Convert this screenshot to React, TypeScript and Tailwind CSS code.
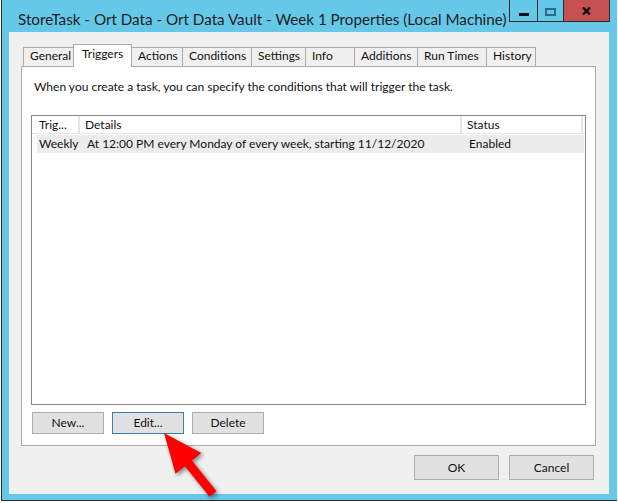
const tabs = [
  { label: "General", w: "w-[51px]" },
  { label: "Triggers", w: "w-[59px]", active: true },
  { label: "Actions", w: "w-[52px]" },
  { label: "Conditions", w: "w-[70px]" },
  { label: "Settings", w: "w-[55px]" },
  { label: "Info", w: "w-[50px]" },
  { label: "Additions", w: "w-[64px]" },
  { label: "Run Times", w: "w-[70px]" },
  { label: "History", w: "w-[50px]" },
]

function TitleButtons() {
  return (
    <div className="-mr-px flex h-[22px] border-x border-b border-[#2a2a2a]">
      <div className="flex w-[28px] items-start justify-center border-r border-[#2a2a2a] pt-[13px]">
        <div className="h-[3px] w-[10px] bg-[#111]" />
      </div>
      <div className="flex w-[26px] items-start justify-center border-r border-[#2a2a2a] pt-[8px]">
        <div className="h-[8px] w-[11px] border-2 border-[#2d6a8a]" />
      </div>
      <div className="flex w-[45px] items-center justify-center bg-[#c75050]">
        <svg width="9" height="8" viewBox="0 0 9 8">
          <path d="M1 0.5 L8 7.5 M8 0.5 L1 7.5" stroke="#111" strokeWidth="2.4" />
        </svg>
      </div>
    </div>
  )
}

function Btn({ label, focus, big }: { label: string; focus?: boolean; big?: boolean }) {
  return (
    <div
      className={`flex items-center justify-center border bg-[#e1e1e1] text-[12px] leading-[16px] ${
        big ? "h-[25px] w-[85px]" : "h-[22px] w-[72px]"
      } ${focus ? "border-[#3c7fb1]" : "border-[#adadad]"}`}
    >
      {label}
    </div>
  )
}

export default function App() {
  return (
    <div className="relative h-[503px] w-[618px] overflow-hidden bg-white font-['Lato',sans-serif] text-[12px] text-[#111]">
      <div className="ml-px flex h-[501px] w-[616px] flex-col border-b border-l border-[#2b2b2b] bg-[#66c8e8] pb-[6px] pl-[7px] pr-[8px]">
        {/* title bar */}
        <div className="flex h-[32px] items-start justify-between">
          <div className="whitespace-nowrap pl-[9px] pt-[9px] text-[15.2px] leading-[20px] text-[#1e1e1e]">
            StoreTask - Ort Data - Ort Data Vault - Week 1 Properties (Local Machine)
          </div>
          <TitleButtons />
        </div>

        {/* client area */}
        <div className="flex flex-1 flex-col bg-[#f0f0f0]">
          <div className="ml-[14px] mt-[12px] flex h-[22px] items-end">
            {tabs.map((t, i) =>
              t.active ? (
                <div
                  key={t.label}
                  className={`relative z-10 -mb-px h-[23px] ${t.w} ${i > 0 ? "-ml-px" : ""} border-x border-t border-[#acacac] bg-white pl-[8px] pt-[1px] leading-[16px]`}
                >
                  {t.label}
                </div>
              ) : (
                <div
                  key={t.label}
                  className={`h-[19px] ${t.w} ${i > 0 ? "-ml-px" : ""} border-x border-t border-[#acacac] bg-[#f0f0f0] pl-[6px] leading-[16px]`}
                >
                  {t.label}
                </div>
              )
            )}
          </div>

          <div className="ml-[12px] flex h-[380px] w-[575px] flex-col border border-[#acacac] bg-white">
            <div className="ml-[12px] mt-[12px] h-[16px] leading-[16px]">
              When you create a task, you can specify the conditions that will trigger the task.
            </div>

            <div className="ml-[9px] mt-[20px] flex h-[290px] w-[555px] flex-col border border-[#828790]">
              <div className="flex h-[18px] border-b border-[#e5e5e5] leading-[16px]">
                <div className="w-[48px] border-r-2 border-[#e5e5e5] pl-[7px] pt-px">Trig...</div>
                <div className="w-[382px] border-r-2 border-[#e5e5e5] pl-[5px] pt-px">Details</div>
                <div className="w-[121px] border-r-2 border-[#e5e5e5] pl-[5px] pt-px">Status</div>
              </div>
              <div className="ml-[5px] mr-px mt-px flex h-[18px] items-center bg-[#ececec] leading-[16px]">
                <div className="w-[48px] pl-[2px]">Weekly</div>
                <div className="w-[382px] pl-[2px]">At 12:00 PM every Monday of every week, starting 11/12/2020</div>
                <div className="pl-[2px]">Enabled</div>
              </div>
            </div>

            <div className="ml-[10px] mt-[7px] flex gap-[8px]">
              <Btn label="New..." />
              <Btn label="Edit..." focus />
              <Btn label="Delete" />
            </div>
          </div>

          <div className="mr-[15px] mt-[9px] flex justify-end gap-[10px]">
            <Btn label="OK" big />
            <Btn label="Cancel" big />
          </div>
        </div>
      </div>

      {/* red annotation arrow */}
      <svg className="pointer-events-none absolute left-0 top-0 drop-shadow-[2px_2px_2px_rgba(0,0,0,0.45)]" width="618" height="503">
        <polygon
          points="164,433 201.3,453.1 191.9,460.6 216.5,491.2 209.5,496.8 184.9,466.2 175.5,473.7"
          fill="#ff0000"
        />
      </svg>
    </div>
  )
}
